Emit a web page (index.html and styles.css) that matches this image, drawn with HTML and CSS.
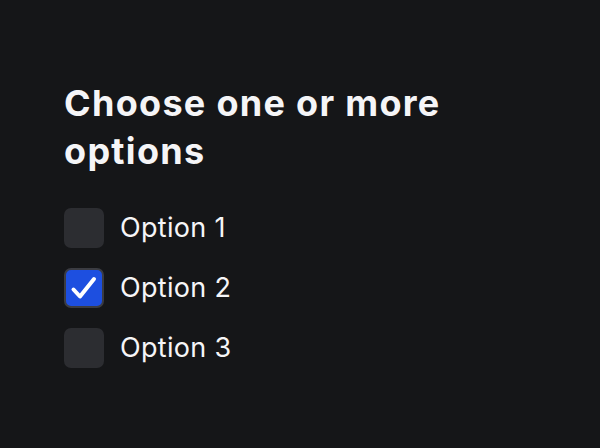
FILE: index.html
```html
<!DOCTYPE html>
<html>
<head>
<meta charset="utf-8">
<link rel="stylesheet" href="styles.css">
</head>
<body>
<main class="page">
  <h1 class="title">Choose one or more options</h1>
  <div class="options">
    <label class="option">
      <span class="box"></span>
      <span class="label">Option 1</span>
    </label>
    <label class="option">
      <span class="box checked">
        <svg viewBox="0 0 40 40" width="40" height="40"><path d="M9.5 21.5 L16 28.5 L30 11" fill="none" stroke="#fff" stroke-width="4" stroke-linecap="round" stroke-linejoin="round"/></svg>
      </span>
      <span class="label">Option 2</span>
    </label>
    <label class="option">
      <span class="box"></span>
      <span class="label">Option 3</span>
    </label>
  </div>
</main>
</body>
</html>
```

FILE: styles.css
```css
html, body {
  margin: 0;
  padding: 0;
  background: #151618;
  height: 100%;
}
body {
  font-family: Inter, "Noto Sans", sans-serif;
  color: #f5f5f7;
}
.page {
  padding: 79px 64px 0 64px;
}
.title {
  margin: 0;
  font-size: 36px;
  font-weight: 700;
  line-height: 48px;
  width: 430px;
  letter-spacing: 1.3px;
}
.options {
  display: flex;
  flex-direction: column;
  gap: 20px;
  margin-top: 33px;
}
.option {
  display: flex;
  align-items: center;
  gap: 16px;
}
.box {
  width: 40px;
  height: 40px;
  box-sizing: border-box;
  border-radius: 7px;
  background: #2c2d31;
  display: flex;
}
.box.checked {
  background: #1d4fe0;
  border: 2px solid #3b3c42;
}
.box.checked svg {
  margin: -2px;
}
.label {
  font-size: 27px;
  line-height: 32px;
  font-weight: 400;
  letter-spacing: 0.3px;
}
```
